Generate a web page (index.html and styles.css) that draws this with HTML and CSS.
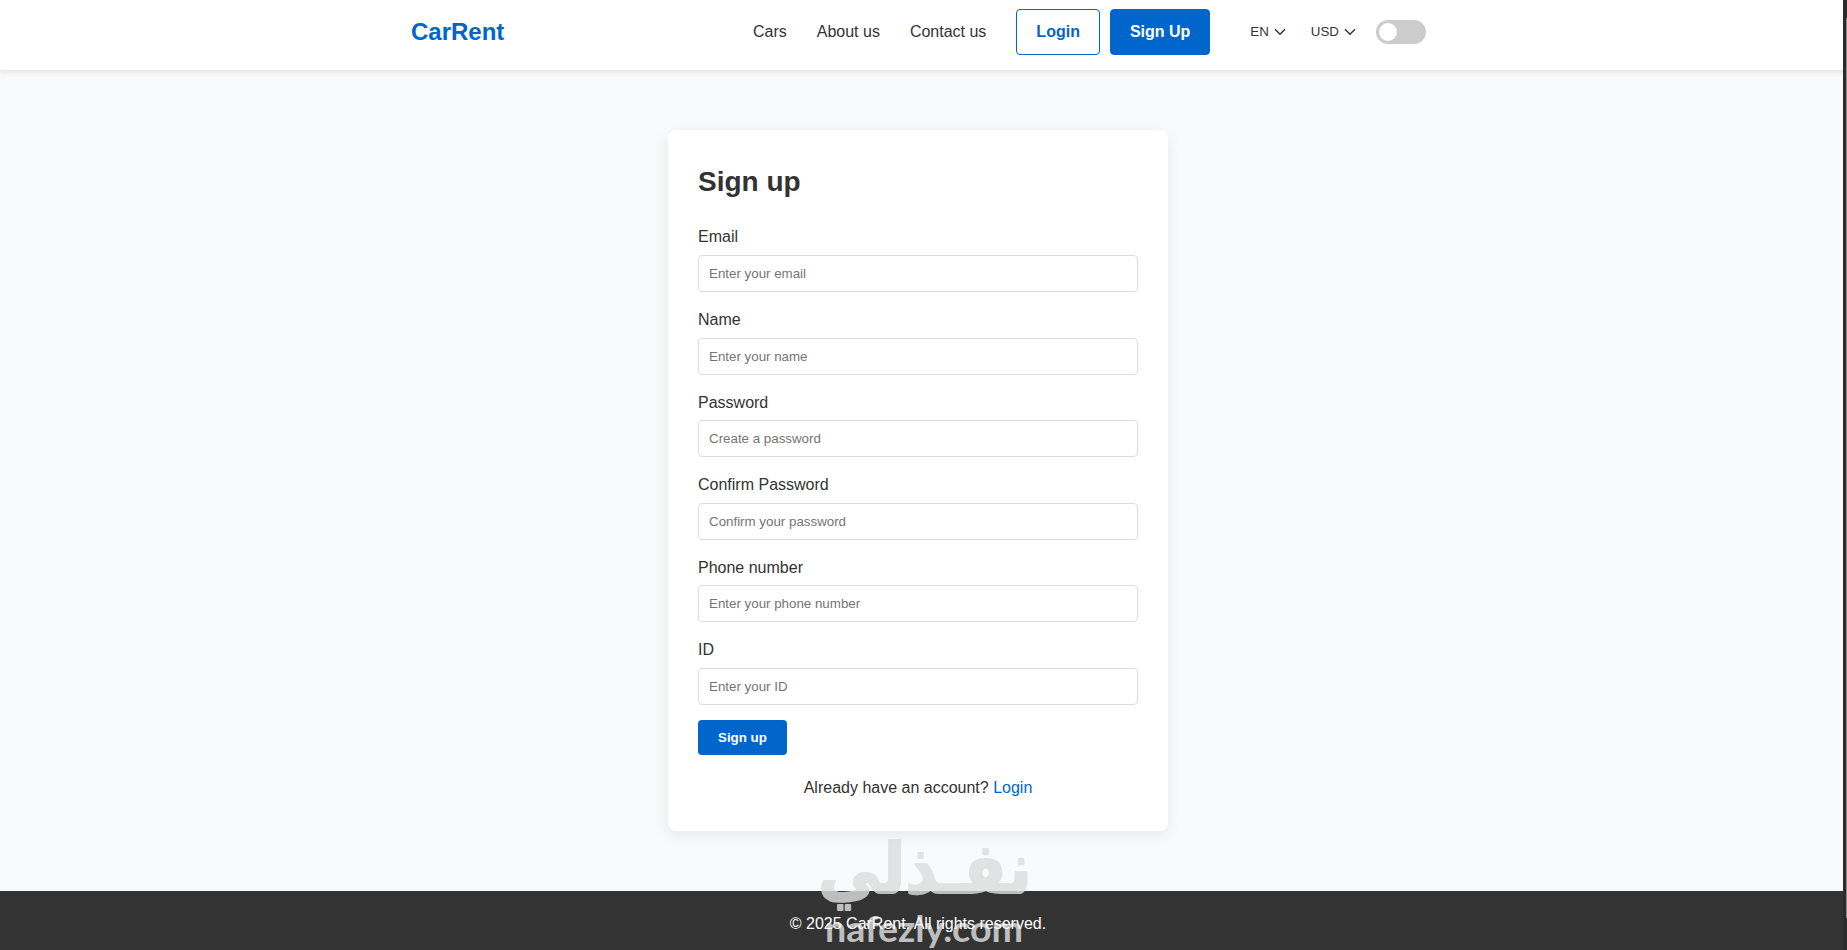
FILE: index.html
```html
<!DOCTYPE html>
<html lang="en">
<head>
  <meta charset="UTF-8">
  <meta name="viewport" content="width=device-width, initial-scale=1.0">
  <title>CarRent - Sign up</title>
  <link rel="stylesheet" href="styles.css">
</head>
<body>
  <!-- Header -->
  <header class="header">
    <div class="container">
      <a href="#" class="logo">CarRent</a>
      <nav class="nav">
        <ul class="nav-links">
          <li><a href="#">Cars</a></li>
          <li><a href="#">About us</a></li>
          <li><a href="#">Contact us</a></li>
        </ul>
        <div class="auth-buttons">
          <a href="#" class="btn btn-outline">Login</a>
          <a href="#" class="btn btn-primary">Sign Up</a>
        </div>
        <div class="preferences">
          <button type="button" class="picker">EN
            <svg class="chevron" viewBox="0 0 12 8"><path d="M1 1.2 L6 6.2 L11 1.2"/></svg>
          </button>
          <button type="button" class="picker">USD
            <svg class="chevron" viewBox="0 0 12 8"><path d="M1 1.2 L6 6.2 L11 1.2"/></svg>
          </button>
          <label class="switch"><span class="knob"></span></label>
        </div>
      </nav>
    </div>
  </header>

  <!-- Sign up form -->
  <main class="main">
    <form class="form-card">
      <h2>Sign up</h2>
      <div class="form-group">
        <label for="email">Email</label>
        <input type="email" id="email" placeholder="Enter your email">
      </div>
      <div class="form-group">
        <label for="name">Name</label>
        <input type="text" id="name" placeholder="Enter your name">
      </div>
      <div class="form-group">
        <label for="password">Password</label>
        <input type="password" id="password" placeholder="Create a password">
      </div>
      <div class="form-group">
        <label for="confirm">Confirm Password</label>
        <input type="password" id="confirm" placeholder="Confirm your password">
      </div>
      <div class="form-group">
        <label for="phone">Phone number</label>
        <input type="tel" id="phone" placeholder="Enter your phone number">
      </div>
      <div class="form-group">
        <label for="id">ID</label>
        <input type="text" id="id" placeholder="Enter your ID">
      </div>
      <button type="button" class="submit">Sign up</button>
      <p class="form-note">Already have an account? <a href="#">Login</a></p>
    </form>
  </main>

  <footer class="footer">
    <p>&copy; 2025 CarRent. All rights reserved.</p>
  </footer>

  <!-- Watermark -->
  <svg class="watermark" viewBox="0 0 240 115">
    <text class="wm-arabic" x="117" y="58" text-anchor="middle" textLength="214" lengthAdjust="spacingAndGlyphs">نفـذلي</text>
    <text class="wm-latin" x="17" y="107" textLength="198" lengthAdjust="spacingAndGlyphs">nafezly.com</text>
  </svg>

  <div class="edge"></div>
</body>
</html>
```
FILE: styles.css
```css
* {
  margin: 0;
  padding: 0;
  box-sizing: border-box;
}
body {
  font-family: "Liberation Sans", Arial, sans-serif;
  line-height: 1.6;
  color: #333;
  background-color: #f8fafc;
  height: 100vh;
  overflow: hidden;
}
a {
  color: #0066cc;
  text-decoration: none;
}

/* Header */
.header {
  height: 69.6px;
  padding: 9px 10px 0 0;
  background-color: #fff;
  box-shadow: 0 2px 5px rgba(0, 0, 0, 0.1);
}
.container {
  display: flex;
  justify-content: space-between;
  align-items: center;
  width: 1015px;
  margin: 0 auto;
}
.logo {
  font-size: 24px;
  font-weight: bold;
}
.nav,
.nav-links,
.auth-buttons,
.preferences {
  display: flex;
  align-items: center;
}
.nav-links {
  gap: 30px;
  margin-right: 30px;
  list-style: none;
}
.nav-links a {
  color: #333;
}
.auth-buttons {
  gap: 10px;
}
.btn {
  padding: 9px 19px;
  border: 1px solid #0066cc;
  border-radius: 4px;
  font-weight: bold;
}
.btn-primary {
  background-color: #0066cc;
  color: #fff;
}
.preferences {
  margin-left: 40px;
}
.picker {
  display: flex;
  align-items: center;
  gap: 5px;
  margin-right: 25px;
  border: none;
  background: none;
  color: #333;
  font-family: inherit;
  font-size: 13.33px;
}
.picker:nth-child(2) {
  margin-right: 20px;
}
.chevron {
  width: 12px;
  height: 8px;
  fill: none;
  stroke: #333;
  stroke-width: 1.5;
}
.switch {
  width: 50px;
  height: 24px;
  padding: 3px;
  border-radius: 24px;
  background-color: #ccc;
}
.knob {
  display: block;
  width: 18px;
  height: 18px;
  border-radius: 50%;
  background-color: #fff;
}

/* Form */
.main {
  padding: 60px 11px 60px 0;
}
.form-card {
  width: 500px;
  margin: 0 auto;
  padding: 30px;
  border-radius: 8px;
  background-color: #fff;
  box-shadow: 0 4px 15px rgba(0, 0, 0, 0.08);
}
.form-card h2 {
  margin-bottom: 20px;
  font-size: 28px;
}
.form-group {
  margin-bottom: 15px;
}
.form-group label {
  display: block;
  margin-bottom: 5px;
}
.form-group input {
  display: block;
  width: 100%;
  height: 37px;
  padding: 10px;
  border: 1px solid #ddd;
  border-radius: 4px;
  font-family: inherit;
  font-size: 13.33px;
}
.form-group input::placeholder {
  color: #757575;
}
.submit {
  display: block;
  height: 35px;
  padding: 10px 20px;
  border: none;
  border-radius: 4px;
  background-color: #0066cc;
  color: #fff;
  font-family: inherit;
  font-size: 13.33px;
  font-weight: bold;
}
.form-note {
  margin-top: 20px;
  text-align: center;
}

/* Footer */
.footer {
  padding: 20px 11px 20px 0;
  background-color: #333;
  color: #fff;
  text-align: center;
}
.footer p {
  position: relative;
  z-index: 1;
}

/* Watermark */
.watermark {
  position: absolute;
  left: 808px;
  top: 835px;
  width: 240px;
  height: 115px;
  overflow: visible;
  fill: #ddd;
  opacity: 0.82;
}
.wm-arabic {
  font-family: "DejaVu Sans", sans-serif;
  font-size: 70px;
  font-weight: bold;
  stroke: #ddd;
  stroke-width: 2;
  stroke-linejoin: round;
}
.wm-latin {
  font-family: Lato, sans-serif;
  font-size: 36px;
  font-weight: bold;
}

/* Window edge */
.edge {
  position: absolute;
  top: 0;
  right: 0;
  width: 4px;
  height: 950px;
  background: linear-gradient(#8a8a8a, #8a8a8a) 3px 18px / 1px 900px no-repeat #2b2b2b;
}
```
